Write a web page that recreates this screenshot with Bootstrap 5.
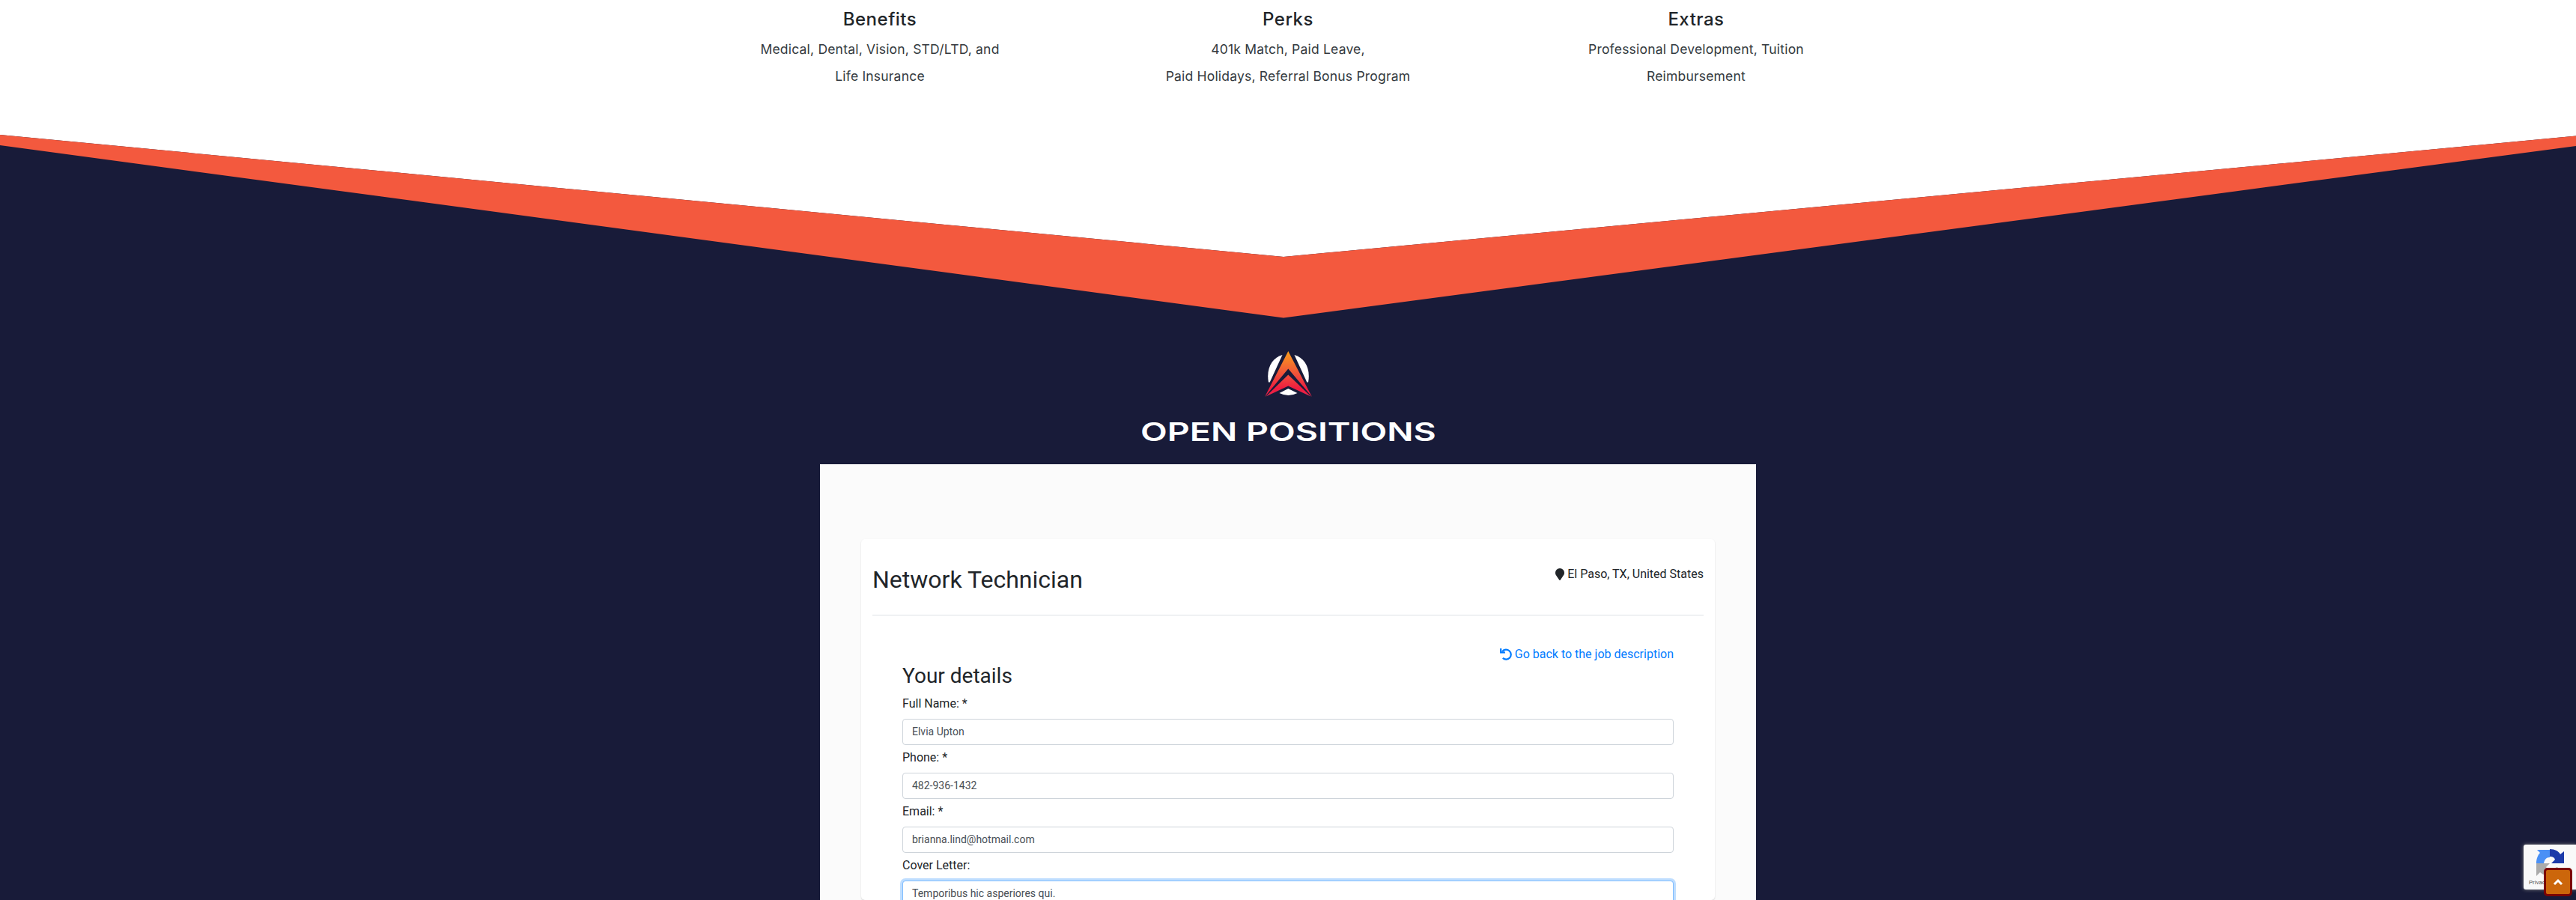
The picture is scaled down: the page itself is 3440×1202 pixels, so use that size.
<!DOCTYPE html>
<html lang="en">
<head>
<meta charset="utf-8">
<title>Careers - Open Positions</title>
<link href="https://cdn.jsdelivr.net/npm/bootstrap@5.3.0/dist/css/bootstrap.min.css" rel="stylesheet">
<style>
  html, body { height: 1202px; overflow: hidden; }
  body { background: #181b39; color: #212529; font-family: Roboto, "Liberation Sans", sans-serif; }
  .benefits { height: 180px; background: #fff; font-family: Inter, sans-serif; }
  .benefit-row { width: 1635px; padding-top: 11px; }
  .benefit-row h2 { font: 500 24px/30px Inter, sans-serif; letter-spacing: .5px; margin-bottom: 7px; }
  .benefit-row p { font: 400 17.5px/36px Inter, sans-serif; letter-spacing: .2px; color: #343a40; }
  .benefit-row span { display: inline-block; white-space: nowrap; }
  .wedge { display: block; width: 100%; height: 288px; }
  .emblem { display: block; width: 64px; height: 62px; }
  .positions-title { font: 600 34.5px/42px Inter, sans-serif; height: 42px; margin: 26px 0 22px; transform: scaleX(1.348); white-space: nowrap; }
  .board { width: 1250px; height: 582px; overflow: hidden; background: #fbfbfb; padding: 100px 55px 0; }
  .job-card { border-radius: 5px; box-shadow: 0 1px 2px rgba(0,0,0,.16); height: 482px; padding: 35px 15px 0; background: #fff; }
  .job-head { height: 67px; border-bottom: 1px solid #dee2e6; }
  .job-head h2 { font-size: 32px; font-weight: 400; line-height: 38.4px; }
  .job-form { padding: 40px 40px 0; }
  .back-link { color: #007bff; }
  .job-form h3 { font-size: 28px; font-weight: 400; line-height: 33.6px; margin-bottom: 8px; }
  .job-form label { display: block; line-height: 24px; margin-bottom: 8px; }
  .job-form .form-control { height: 35px; font-size: 14px; line-height: 21px; color: #495057; border-color: #ced4da; border-radius: 4px; margin-bottom: 5px; }
  .job-form textarea.form-control { height: 40px; overflow: hidden; border-color: #80bdff; box-shadow: 0 0 0 3px rgba(0,123,255,.25); resize: none; }
  .captcha { right: 0; top: 1128px; width: 70px; height: 60px; background: #f9f9f9; border-radius: 3px 0 0 3px; box-shadow: 0 0 5px gray; color: #555; }
  .captcha svg { margin: 6px 0 0 16px; display: block; }
  .captcha small { display: block; font-size: 8px; line-height: 10px; margin: 2px 0 0 7px; white-space: nowrap; }
  .to-top { left: 3397px; top: 1159px; width: 38px; height: 38px; background: #cc660b; border: 3px solid #7c0303; border-radius: 5px; padding: 0; }
</style>
<script src="https://cdn.jsdelivr.net/npm/bootstrap@5.3.0/dist/js/bootstrap.bundle.min.js"></script>
</head>
<body>
<section class="benefits">
  <div class="row g-0 mx-auto text-center benefit-row">
    <div class="col-4"><h2>Benefits</h2><p class="mb-0"><span>Medical, Dental, Vision, STD/LTD, and</span><br><span>Life Insurance</span></p></div>
    <div class="col-4"><h2>Perks</h2><p class="mb-0"><span>401k Match, Paid Leave,</span><br><span>Paid Holidays, Referral Bonus Program</span></p></div>
    <div class="col-4"><h2>Extras</h2><p class="mb-0"><span>Professional Development, Tuition</span><br><span>Reimbursement</span></p></div>
  </div>
</section>
<svg class="wedge" viewBox="0 0 3440 288" preserveAspectRatio="none" aria-hidden="true">
  <path d="M0 0H3440V1.5L1714 163L0 0Z" fill="#fff"/>
  <path d="M0 0L1714 163L3440 1.5V15L1714 244.5L0 14Z" fill="#f3593e"/>
</svg>
<main class="d-flex flex-column align-items-center">
  <svg class="emblem" viewBox="0 0 64 62" aria-hidden="true">
    <defs><linearGradient id="flame" gradientUnits="userSpaceOnUse" x1="0" y1="0" x2="0" y2="62"><stop offset="0" stop-color="#f9a01b"/><stop offset=".55" stop-color="#ef4b3c"/><stop offset=".82" stop-color="#ee1c3f"/><stop offset="1" stop-color="#e8274b"/></linearGradient></defs>
    <path d="M24.5 6C11 9.500 2.500 24 6 42.500H7.700Z" fill="#fff"/>
    <path d="M40.500 6C54 9.500 62.500 24 59 42.500H57.300Z" fill="#fff"/>
    <path d="M20.500 57L32.300 51L44.500 57Q32.500 63 20.500 57Z" fill="#fff"/>
    <path d="M32.300 1L64 62L32.300 24.500L1 62Z" fill="url(#flame)"/>
    <path d="M32.300 32.500L62.500 61.500L32.300 47.500L2.500 61.500Z" fill="url(#flame)"/>
  </svg>
  <h1 class="positions-title text-white">OPEN POSITIONS</h1>
  <div class="board">
    <article class="job-card">
      <header class="job-head d-flex justify-content-between align-items-start">
        <h2 class="mb-0">Network Technician</h2>
        <div class="d-flex align-items-center gap-1"><svg width="12" height="16" viewBox="0 0 384 512" fill="currentColor"><path d="M172 501C27 291 0 269 0 192a192 192 0 0 1 384 0c0 77-27 99-172 309a24 24 0 0 1-40 0z"/></svg><span>El Paso, TX, United States</span></div>
      </header>
      <form class="job-form">
        <div class="d-flex justify-content-end"><a href="#" class="back-link text-decoration-none d-flex align-items-center gap-1"><svg width="16" height="16" viewBox="0 0 16 16" fill="none" stroke="currentColor"><path d="M3.200 4.100A6.500 6.500 0 1 1 3.800 12.900" stroke-width="2.200"/><path d="M1.200 0V5.400H7" stroke-width="2.200"/></svg><span>Go back to the job description</span></a></div>
        <h3>Your details</h3>
        <label for="fullname">Full Name: *</label>
        <input id="fullname" class="form-control" type="text" value="Elvia Upton">
        <label for="phone">Phone: *</label>
        <input id="phone" class="form-control" type="text" value="482-936-1432">
        <label for="email">Email: *</label>
        <input id="email" class="form-control" type="text" value="brianna.lind@hotmail.com">
        <label for="cover">Cover Letter:</label>
        <textarea id="cover" class="form-control">Temporibus hic asperiores qui.</textarea>
      </form>
    </article>
  </div>
</main>
<aside class="captcha position-absolute overflow-hidden">
  <svg width="40" height="38" viewBox="0 0 40 38"><path d="M1 19C1 13 3 8 6 5L2 1H19V11C14 11 12 14 11 19Z" fill="#4a90f5"/><path d="M19 0C26 0 31 3 33 7L38 3V19H21L26 14C25 11 23 10 19 10Z" fill="#1c3aa9"/><path d="M1 19H19L14 24C16 28 20 29 24 26L29 24L34 30C27 38 14 38 6 31L1 36Z" fill="#ababab"/></svg>
  <small>Privacy</small>
</aside>
<button class="to-top position-absolute d-flex align-items-center justify-content-center" type="button" aria-label="Back to top"><svg width="14" height="10" viewBox="0 0 14 10" fill="none" stroke="#fff" stroke-width="3"><path d="M2 8L7 3L12 8"/></svg></button>
</body>
</html>
